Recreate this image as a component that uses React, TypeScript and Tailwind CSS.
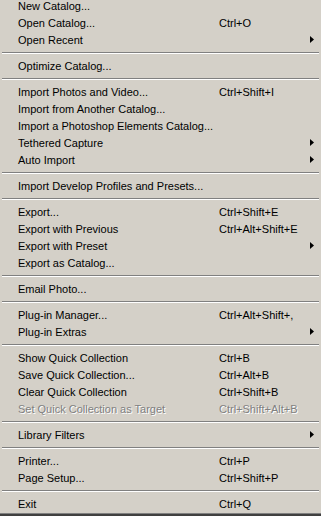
type Item =
  | { sep: true }
  | { label: string; shortcut?: string; sub?: boolean; disabled?: boolean };

const items: Item[] = [
  { label: "New Catalog..." },
  { label: "Open Catalog...", shortcut: "Ctrl+O" },
  { label: "Open Recent", sub: true },
  { sep: true },
  { label: "Optimize Catalog..." },
  { sep: true },
  { label: "Import Photos and Video...", shortcut: "Ctrl+Shift+I" },
  { label: "Import from Another Catalog..." },
  { label: "Import a Photoshop Elements Catalog..." },
  { label: "Tethered Capture", sub: true },
  { label: "Auto Import", sub: true },
  { sep: true },
  { label: "Import Develop Profiles and Presets..." },
  { sep: true },
  { label: "Export...", shortcut: "Ctrl+Shift+E" },
  { label: "Export with Previous", shortcut: "Ctrl+Alt+Shift+E" },
  { label: "Export with Preset", sub: true },
  { label: "Export as Catalog..." },
  { sep: true },
  { label: "Email Photo..." },
  { sep: true },
  { label: "Plug-in Manager...", shortcut: "Ctrl+Alt+Shift+," },
  { label: "Plug-in Extras", sub: true },
  { sep: true },
  { label: "Show Quick Collection", shortcut: "Ctrl+B" },
  { label: "Save Quick Collection...", shortcut: "Ctrl+Alt+B" },
  { label: "Clear Quick Collection", shortcut: "Ctrl+Shift+B" },
  { label: "Set Quick Collection as Target", shortcut: "Ctrl+Shift+Alt+B", disabled: true },
  { sep: true },
  { label: "Library Filters", sub: true },
  { sep: true },
  { label: "Printer...", shortcut: "Ctrl+P" },
  { label: "Page Setup...", shortcut: "Ctrl+Shift+P" },
  { sep: true },
  { label: "Exit", shortcut: "Ctrl+Q" },
];

const SubArrow = () => (
  <svg width="4" height="7" viewBox="0 0 4 7" className="block">
    <path d="M0 0 L4 3.5 L0 7 Z" fill="#000" />
  </svg>
);

export default function App() {
  return (
    <div className="w-[321px] h-[516px] overflow-hidden bg-[#d4d0c8] font-['Liberation_Sans',Arial,sans-serif] text-[11px] text-black">
      <div className="-mt-[3px]">
        {items.map((it, i) =>
          "sep" in it ? (
            <div key={i} className="h-[9px] pt-[4px] ml-[2px] mr-[2px]">
              <div className="h-px bg-[#808080]" />
              <div className="h-px bg-white" />
            </div>
          ) : (
            <div
              key={i}
              className={`relative flex items-center h-[17px] pt-[2px] leading-[15px] whitespace-nowrap ${
                it.disabled ? "text-[#808080] [text-shadow:1px_1px_0_#ffffff]" : ""
              }`}
            >
              <span className="pl-[18px] w-[219px] overflow-visible">{it.label}</span>
              {it.shortcut && <span>{it.shortcut}</span>}
              {it.sub && (
                <span className="absolute left-[310px] top-[5px]">
                  <SubArrow />
                </span>
              )}
            </div>
          )
        )}
      </div>
      <div className="mt-[1px] h-px bg-[#808080]" />
      <div className="h-[2px] bg-[#404040]" />
    </div>
  );
}
